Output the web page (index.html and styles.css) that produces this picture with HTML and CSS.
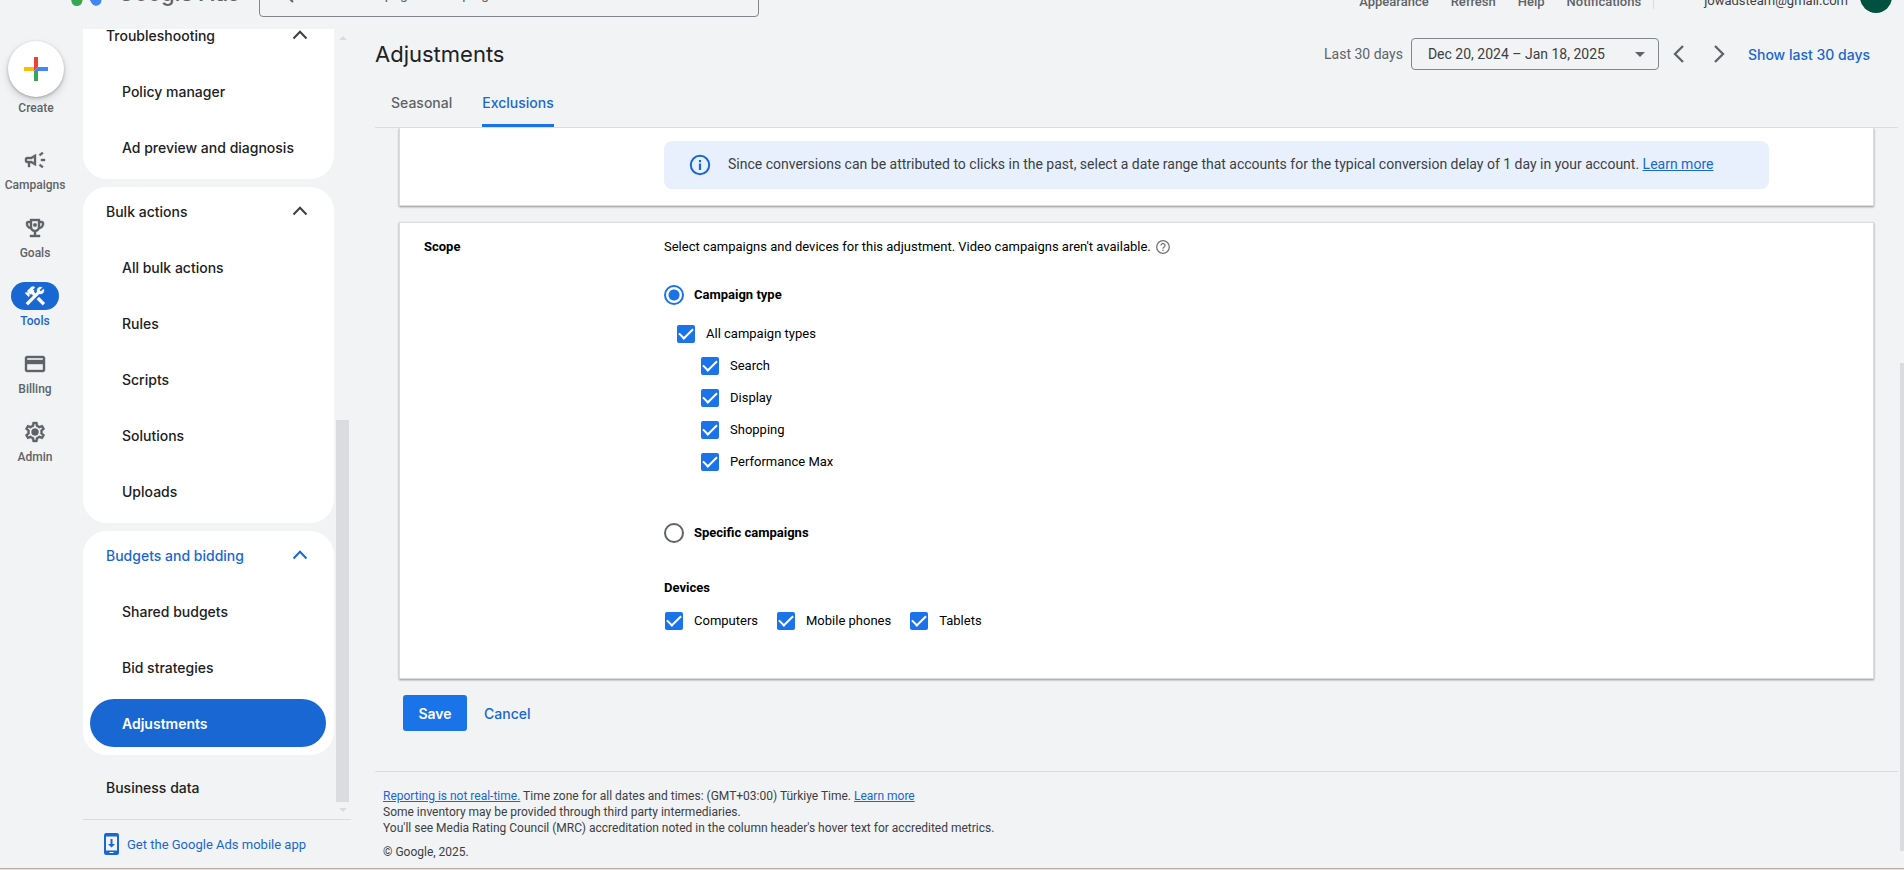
FILE: index.html
```html
<!DOCTYPE html>
<html lang="en">
<head>
<meta charset="utf-8">
<title>Adjustments - Google Ads</title>
<link rel="stylesheet" href="styles.css">
</head>
<body>
<svg class="defs" aria-hidden="true">
  <symbol id="chevron-up" viewBox="0 0 16 16"><path d="M1.500 11.500 8 4.800l6.500 6.700" fill="none" stroke="currentColor" stroke-width="2"/></symbol>
  <symbol id="chevron-left" viewBox="0 0 18 18"><path d="M13 1 5 9l8 8" fill="none" stroke="currentColor" stroke-width="2.300"/></symbol>
  <symbol id="chevron-right" viewBox="0 0 18 18"><path d="M5 1l8 8-8 8" fill="none" stroke="currentColor" stroke-width="2.300"/></symbol>
</svg>
<div class="app">
  <header class="topbar">
    <a class="brand" href="#">
      <svg class="brand-mark" viewBox="0 0 192 192" aria-hidden="true"><path d="M68 26 A32 32 0 0 1 124 26 L184 130 A32 32 0 0 1 128 162 L68 58Z" fill="#4285f4"/><path d="M64 32 8 128l56 32 40-68Z" fill="#fbbc04"/><circle cx="36" cy="146" r="34" fill="#34a853"/></svg>
      <span>Google Ads</span>
    </a>
    <label class="search"><svg width="18" height="18" viewBox="0 0 18 18" aria-hidden="true"><path d="M12 12l5 5M7 2a5 5 0 1 0 0 10A5 5 0 1 0 7 2" fill="none" stroke="#5f6368" stroke-width="2"/></svg><input type="text" aria-label="Search" placeholder="Search for a page or campaign"></label>
    <nav class="actions">
      <button type="button">Appearance</button>
      <button type="button">Refresh</button>
      <button type="button">Help</button>
      <button type="button">Notifications</button>
    </nav>
    <div class="account"><span>jowadsteam@gmail.com</span><button class="avatar" type="button" aria-label="Account">j</button></div>
  </header>
  <div class="body">
    <nav class="rail">
      <button class="create" type="button">
        <span class="fab"><svg width="24" height="24" viewBox="0 0 24 24" aria-hidden="true"><path d="M10 0h4v10l-4 4Z" fill="#ea4335"/><path d="M0 10h10v4H0Z" fill="#fbbc04"/><path d="M10 14h4v10h-4Z" fill="#34a853"/><path d="M14 10h10v4H10Z" fill="#4285f4"/></svg></span>
        Create
      </button>
      <button class="rail-item" type="button"><span class="pill"><svg viewBox="0 0 24 24"><path d="M18 11v2h4v-2h-4zm-2 6.610c.96.710 2.210 1.650 3.200 2.390.4-.53.8-1.070 1.200-1.600-.99-.74-2.240-1.680-3.200-2.400-.4.540-.8 1.080-1.200 1.610zM20.400 5.600c-.4-.53-.8-1.070-1.200-1.600-.99.740-2.240 1.680-3.200 2.400.4.530.8 1.070 1.200 1.600.96-.72 2.210-1.650 3.200-2.400zM4 9c-1.100 0-2 .9-2 2v2c0 1.100.9 2 2 2h1v4h2v-4h1l5 3V6L8 9H4zm5.030 1.710L11 9.530v4.940l-1.970-1.180-.48-.29H4v-2h4.550l.48-.29z"/></svg></span>Campaigns</button>
      <button class="rail-item" type="button"><span class="pill"><svg viewBox="0 0 24 24"><path d="M19 5h-2V3H7v2H5c-1.100 0-2 .9-2 2v1c0 2.550 1.920 4.630 4.390 4.940.63 1.500 1.980 2.630 3.610 2.960V19H7v2h10v-2h-4v-3.100c1.630-.33 2.980-1.460 3.610-2.960C19.080 12.630 21 10.550 21 8V7c0-1.100-.9-2-2-2zM5 8V7h2v3.820C5.840 10.400 5 9.300 5 8zm7 6c-1.650 0-3-1.350-3-3V5h6v6c0 1.650-1.350 3-3 3zm7-6c0 1.300-.84 2.400-2 2.820V7h2v1z"/><circle cx="12" cy="9" r="1.800"/></svg></span>Goals</button>
      <button class="rail-item active" type="button"><span class="pill"><svg viewBox="0 0 24 24"><path d="M13.783 15.172l2.121-2.121 5.996 5.996-2.121 2.121zM17.500 10c1.930 0 3.500-1.570 3.500-3.500 0-.58-.16-1.120-.41-1.600l-2.700 2.700-1.490-1.490 2.700-2.700c-.48-.25-1.020-.41-1.600-.41C15.570 3 14 4.570 14 6.500c0 .41.080.8.210 1.160l-1.850 1.850-1.780-1.780.71-.71-1.410-1.410L12 3.490c-1.170-1.170-3.070-1.170-4.240 0L4.220 7.030l1.410 1.410H2.810l-.71.710 3.540 3.540.71-.71V9.150l1.410 1.410.71-.71 1.780 1.780-7.410 7.410 2.120 2.120L16.340 9.790c.36.130.75.210 1.160.21z"/></svg></span>Tools</button>
      <button class="rail-item" type="button"><span class="pill"><svg viewBox="0 0 24 24"><path d="M20 4H4c-1.110 0-1.990.89-1.990 2L2 18c0 1.110.89 2 2 2h16c1.110 0 2-.89 2-2V6c0-1.110-.89-2-2-2zm0 14H4v-6h16v6zm0-10H4V6h16v2z"/></svg></span>Billing</button>
      <button class="rail-item" type="button"><span class="pill"><svg viewBox="0 0 24 24"><path d="M19.430 12.980c.04-.32.07-.64.07-.98s-.03-.66-.07-.98l2.110-1.650c.19-.15.24-.42.12-.64l-2-3.460c-.12-.22-.39-.3-.61-.22l-2.490 1c-.52-.4-1.080-.73-1.690-.98l-.38-2.650C14.460 2.180 14.250 2 14 2h-4c-.25 0-.46.180-.49.420l-.38 2.650c-.61.250-1.170.59-1.690.98l-2.490-1c-.23-.09-.49 0-.61.220l-2 3.460c-.13.220-.07.490.12.640l2.110 1.650c-.04.320-.07.650-.07.980s.03.660.07.980l-2.110 1.650c-.19.150-.24.420-.12.640l2 3.460c.12.220.39.300.61.220l2.490-1c.52.400 1.080.730 1.690.980l.38 2.650c.03.240.24.420.49.420h4c.25 0 .46-.18.49-.42l.38-2.650c.61-.25 1.170-.59 1.690-.98l2.490 1c.23.090.49 0 .61-.22l2-3.460c.12-.22.07-.49-.12-.64l-2.110-1.650zM17.450 11.270c.04.310.05.520.05.730 0 .21-.02.430-.05.730l-.14 1.130.89.700 1.080.84-.7 1.210-1.270-.51-1.040-.42-.9.680c-.43.320-.84.560-1.250.73l-1.060.43-.16 1.130-.2 1.350h-1.400l-.35-2.480-1.060-.43c-.43-.18-.83-.41-1.230-.71l-.91-.7-1.060.43-1.270.51-.7-1.210 1.970-1.540-.14-1.130c-.03-.31-.05-.54-.05-.74s.02-.43.05-.73l.14-1.130L4.720 8.600l.7-1.210 2.310.94.9-.68c.43-.32.84-.56 1.250-.73l1.060-.43.36-2.480h1.390l.35 2.480 1.060.43c.43.180.83.410 1.230.71l.91.700 2.330-.94.700 1.210-1.960 1.540.14 1.130z"/><circle cx="12" cy="12" r="3.500"/></svg></span>Admin</button>
    </nav>
    <div class="side">
      <div class="side-scroll">
        <div class="groups">
          <section class="group first">
            <button class="group-head" type="button">Troubleshooting<svg><use href="#chevron-up"/></svg></button>
            <a href="#">Policy manager</a>
            <a href="#">Ad preview and diagnosis</a>
          </section>
          <section class="group">
            <button class="group-head" type="button">Bulk actions<svg><use href="#chevron-up"/></svg></button>
            <a href="#">All bulk actions</a>
            <a href="#">Rules</a>
            <a href="#">Scripts</a>
            <a href="#">Solutions</a>
            <a href="#">Uploads</a>
          </section>
          <section class="group">
            <button class="group-head open" type="button">Budgets and bidding<svg><use href="#chevron-up"/></svg></button>
            <a href="#">Shared budgets</a>
            <a href="#">Bid strategies</a>
            <a class="current" href="#">Adjustments</a>
          </section>
          <button class="group-head" type="button">Business data</button>
        </div>
        <div class="bar"><i class="up"></i><i class="thumb"></i><i class="down"></i></div>
      </div>
      <a class="get-app" href="#"><svg width="16" height="22" viewBox="0 0 16 22" aria-hidden="true"><rect x="1" y="1" width="13" height="20" rx="1.500" fill="none" stroke="#1967d2" stroke-width="2"/><path d="M1 2h13M1 19h13" stroke="#1967d2" stroke-width="3"/><path d="M6.500 6h2v5H11l-3.500 3.500L4 11h2.500Z" fill="#1967d2"/><path d="M5.500 19.500h4" stroke="#fff"/></svg>Get the Google Ads mobile app</a>
    </div>
    <main class="main">
      <div class="title-row">
        <h1>Adjustments</h1>
        <span class="range-label">Last 30 days</span>
        <button class="range" type="button">Dec 20, 2024 – Jan 18, 2025<i></i></button>
        <button class="step" type="button" aria-label="Previous period"><svg><use href="#chevron-left"/></svg></button>
        <button class="step" type="button" aria-label="Next period"><svg><use href="#chevron-right"/></svg></button>
        <button class="show-last" type="button">Show last 30 days</button>
      </div>
      <nav class="tabs"><a href="#">Seasonal</a><a class="selected" href="#">Exclusions</a></nav>
      <div class="content">
        <section class="card info-card">
          <p class="notice"><svg width="22" height="22" viewBox="0 0 22 22" aria-hidden="true"><circle cx="11" cy="11" r="9.200" fill="none" stroke="#1967d2" stroke-width="2"/><path d="M11 6v2.200M11 9.500V16" stroke="#1967d2" stroke-width="2.200"/></svg><span>Since conversions can be attributed to clicks in the past, select a date range that accounts for the typical conversion delay of 1 day in your account. <a href="#">Learn more</a></span></p>
        </section>
        <section class="card scope">
          <h2>Scope</h2>
          <form class="fields">
            <p class="hint">Select campaigns and devices for this adjustment. Video campaigns aren't available.<svg width="14" height="14" viewBox="0 0 14 14" aria-hidden="true"><circle cx="7" cy="7" r="6.300" fill="none" stroke="#757575" stroke-width="1.300"/><path d="M5 5.500a2 2 0 1 1 3.200 1.600C7.400 7.700 7 8 7 8.700M7 9.800v1.300" fill="none" stroke="#757575" stroke-width="1.300"/></svg></p>
            <label class="radio"><input type="radio" name="by" checked>Campaign type</label>
            <div class="types">
              <label class="check parent"><input type="checkbox" checked>All campaign types</label>
              <label class="check"><input type="checkbox" checked>Search</label>
              <label class="check"><input type="checkbox" checked>Display</label>
              <label class="check"><input type="checkbox" checked>Shopping</label>
              <label class="check"><input type="checkbox" checked>Performance Max</label>
            </div>
            <label class="radio"><input type="radio" name="by">Specific campaigns</label>
            <h3>Devices</h3>
            <div class="devices">
              <label class="check"><input type="checkbox" checked>Computers</label>
              <label class="check"><input type="checkbox" checked>Mobile phones</label>
              <label class="check"><input type="checkbox" checked>Tablets</label>
            </div>
          </form>
        </section>
        <div class="buttons"><button class="save" type="button">Save</button><button class="cancel" type="button">Cancel</button></div>
        <footer class="legal">
          <p><a href="#">Reporting is not real-time.</a> Time zone for all dates and times: (GMT+03:00) Türkiye Time. <a href="#">Learn more</a></p>
          <p>Some inventory may be provided through third party intermediaries.</p>
          <p>You'll see Media Rating Council (MRC) accreditation noted in the column header's hover text for accredited metrics.</p>
          <p class="copy">© Google, 2025.</p>
        </footer>
      </div>
    </main>
    <div class="page-bar"><i></i></div>
  </div>
</div>
</body>
</html>
```

FILE: styles.css
```css
* { box-sizing: border-box; }
body { margin: 0; background: #f1f3f4; color: #202124; font-family: Roboto, sans-serif; font-size: 14px; }
h1, h2, h3, p { margin: 0; font-weight: 400; }
button { border: 0; padding: 0; background: none; color: inherit; font: inherit; cursor: pointer; }
a { color: #1967d2; text-decoration: none; }
svg { flex: none; }
.defs { display: none; }
.app { display: flex; flex-direction: column; height: 100vh; overflow: hidden; border-bottom: 1px solid #eadacf; }

/* top bar, scrolled partly out of view */
.topbar { flex: none; display: flex; align-items: center; height: 64px; margin-top: -35px; padding-right: 12px; }
.brand { display: flex; align-items: center; gap: 16px; width: 259px; padding: 0 0 8px 71px; color: #5f6368; font: 500 22px Inter, sans-serif; white-space: nowrap; }
.brand-mark { width: 31px; height: 31px; margin-bottom: 2px; }
.search { display: flex; align-items: center; gap: 12px; width: 500px; height: 40px; padding: 0 16px 6px; border: 1px solid #80868b; border-radius: 4px; }
.search input { flex: 1; border: 0; padding: 0; outline: 0; background: none; font: 14px Roboto, sans-serif; }
.search input::placeholder { color: #5f6368; opacity: 1; }
.actions { display: flex; align-items: flex-end; gap: 22px; height: 24px; margin-left: auto; padding-right: 12px; border-right: 1px solid #dadce0; font-size: 13px; font-weight: 500; color: #5f6368; }
.account { display: flex; align-items: center; gap: 12px; padding-left: 50px; color: #3c4043; font-size: 13px; }
.account span { padding-top: 6px; }
.avatar { width: 32px; height: 32px; padding-bottom: 10px; border-radius: 50%; background: #00513f; color: #fff; font-size: 14px; }

.body { flex: 1; min-height: 0; display: flex; border-bottom: 1px solid #bdaea6; }
.rail { flex: none; width: 83px; padding-top: 12px; color: #5f6368; font-size: 12px; font-weight: 500; }
.create { display: flex; flex-direction: column; align-items: center; gap: 3px; width: 72px; margin-bottom: 30px; line-height: 16px; }
.fab { display: flex; align-items: center; justify-content: center; width: 56px; height: 56px; border-radius: 50%; background: #fff; box-shadow: 0 1px 3px #0004, 0 4px 8px #0002; }
.rail-item { display: flex; flex-direction: column; align-items: center; gap: 3px; width: 70px; height: 68px; line-height: 16px; }
.pill { display: flex; align-items: center; justify-content: center; width: 48px; height: 28px; border-radius: 14px; }
.pill svg { width: 24px; height: 24px; fill: currentColor; stroke: currentColor; stroke-width: 0.4; }
.active { color: #1967d2; }
.active .pill { background: #1967d2; color: #fff; }

.side { flex: none; width: 268px; display: flex; flex-direction: column; }
.side-scroll { flex: 1; min-height: 0; display: flex; gap: 2px; overflow: hidden; }
.groups { width: 251px; font-family: Inter, sans-serif; font-weight: 500; }
.group { margin-bottom: 8px; padding-bottom: 8px; border-radius: 24px; background: #fff; }
.group.first { border-radius: 0 0 24px 24px; }
.group-head { display: flex; align-items: center; justify-content: space-between; width: 100%; height: 48px; padding: 0 26px 0 23px; }
.group-head svg { width: 16px; height: 16px; color: #3c4043; }
.group-head.open, .open svg { color: #1967d2; }
.first .group-head { height: 30px; padding-bottom: 18px; }
.group a { display: flex; align-items: center; height: 48px; margin: 8px 8px 0 7px; padding-left: 32px; border-radius: 24px; color: #202124; }
.group .current { background: #1967d2; color: #fff; font-weight: 600; }
.bar { width: 13px; display: flex; flex-direction: column; align-items: center; padding: 7px 0; }
.bar .up, .bar .down { border: 4px solid transparent; }
.bar .up { border-top: 0; border-bottom-color: #dadce0; }
.bar .down { border-bottom: 0; border-top-color: #dadce0; }
.thumb { width: 13px; height: 382px; margin: auto 0 6px; background: #dadce0; }
.get-app { display: flex; align-items: center; gap: 7px; height: 49px; padding-left: 21px; border-top: 1px solid #dadce0; font-size: 13px; }

.main { flex: 1; min-width: 0; display: flex; flex-direction: column; padding-left: 24px; }
.title-row { display: flex; align-items: center; height: 50px; padding-right: 28px; }
h1 { flex: 1; font: 22px Inter, sans-serif; }
.range-label { margin-right: 8px; color: #5f6368; }
.range { display: flex; align-items: center; justify-content: space-between; width: 248px; height: 32px; padding: 0 13px 0 16px; border: 1px solid #80868b; border-radius: 4px; color: #3c4043; }
.range i { border: 5px solid transparent; border-top-color: #5f6368; border-bottom: 0; }
.step { display: flex; align-items: center; justify-content: center; width: 40px; height: 32px; }
.step svg { width: 18px; height: 18px; color: #5f6368; }
.show-last { margin-left: 9px; color: #1967d2; font-family: Inter, sans-serif; font-weight: 500; }
.tabs { display: flex; gap: 30px; height: 49px; padding-left: 16px; border-bottom: 1px solid #dadce0; font-family: Inter, sans-serif; font-weight: 500; }
.tabs a { display: flex; align-items: center; padding-top: 2px; color: #5f6368; border-bottom: 3px solid transparent; }
.tabs .selected { color: #1967d2; border-color: #1a73e8; }
.content { flex: 1; min-height: 0; overflow: hidden; }
.card { margin: 0 24px 16px; border: 1px solid #dadce0; background: #fff; box-shadow: 0 1px 2px #0006; }
.info-card { border-top: 0; padding: 13px 104px 16px 264px; }
.notice { display: flex; align-items: center; gap: 17px; min-height: 48px; padding: 0 24px 0 25px; border-radius: 8px; background: #e8f0fe; color: #3c4043; }
.notice span { padding-bottom: 2px; }
.notice a, .legal a { text-decoration: underline; }
.scope { display: flex; padding: 16px 24px 48px; color: #000; font-size: 13px; line-height: 16px; }
h2 { width: 240px; font-size: 13px; font-weight: 700; }
.hint { display: flex; align-items: center; gap: 5px; margin-bottom: 30px; }
.radio { display: flex; align-items: center; gap: 10px; font-weight: 700; }
.radio input { appearance: none; width: 20px; height: 20px; margin: 0; border: 2px solid #5f6368; border-radius: 50%; }
.radio input:checked { border-color: #1a73e8; background: radial-gradient(#1a73e8 5px, transparent 6px); }
.types { display: grid; gap: 14px; margin: 20px 0 52px 13px; }
.types .check { margin-left: 24px; }
.types .parent { margin-left: 0; }
.check { display: flex; align-items: center; gap: 11px; height: 18px; }
.check input { appearance: none; width: 18px; height: 18px; margin: 0; border-radius: 2px; background: #1a73e8; display: grid; place-items: center; }
.check input::before { content: ""; width: 12px; height: 6px; margin-bottom: 4px; border: solid #fff; border-width: 0 0 2px 2px; transform: rotate(-45deg); }
h3 { margin: 37px 0 16px; font-size: 13px; font-weight: 700; }
.devices { display: flex; gap: 19px; padding-left: 1px; }
.buttons { display: flex; gap: 17px; padding: 0 0 40px 28px; font-family: Inter, sans-serif; font-weight: 500; }
.save { width: 64px; height: 36px; border-radius: 3px; background: #1a73e8; color: #fff; font-weight: 600; }
.cancel { color: #1967d2; }
.legal { border-top: 1px solid #dadce0; padding: 16px 8px 8px; color: #3c4043; font-size: 12px; line-height: 16px; }
.copy { margin-top: 8px; }
.page-bar { flex: none; width: 6px; display: flex; justify-content: flex-end; align-items: flex-end; padding-bottom: 17px; overflow: hidden; }
.page-bar i { width: 4px; height: 488px; background: #dadce0; }
```
